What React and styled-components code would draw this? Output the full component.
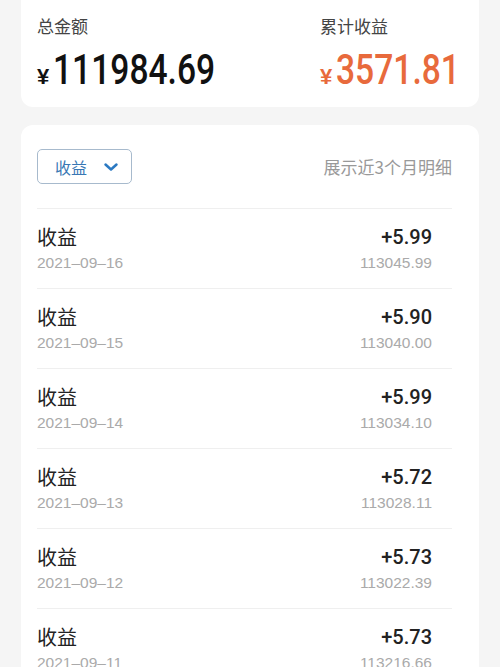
import styled, { createGlobalStyle } from "styled-components";

const GlobalStyle = createGlobalStyle`
  body {
    margin: 0;
    background: #f5f5f5;
    font-family: "Liberation Sans", "Noto Sans CJK SC", sans-serif;
  }
`;

const records = [
  { date: "2021–09–16", amount: "+5.99", balance: "113045.99" },
  { date: "2021–09–15", amount: "+5.90", balance: "113040.00" },
  { date: "2021–09–14", amount: "+5.99", balance: "113034.10" },
  { date: "2021–09–13", amount: "+5.72", balance: "113028.11" },
  { date: "2021–09–12", amount: "+5.73", balance: "113022.39" },
  { date: "2021–09–11", amount: "+5.73", balance: "113216.66" },
];

function App() {
  return (
    <Page>
      <GlobalStyle />
      <SummaryCard>
        <Stat>
          <StatLabel>总金额</StatLabel>
          <StatValue>
            <Yen>¥</Yen>
            <Digits>111984.69</Digits>
          </StatValue>
        </Stat>
        <Stat>
          <StatLabel>累计收益</StatLabel>
          <StatValue $accent>
            <Yen>¥</Yen>
            <Digits>3571.81</Digits>
          </StatValue>
        </Stat>
      </SummaryCard>

      <ListCard>
        <ListHeader>
          <Filter>
            收益
            <svg width="16" height="10" viewBox="0 0 16 10">
              <polyline
                points="2.5,2.5 8,7.5 13.5,2.5"
                fill="none"
                stroke="#2b79c2"
                strokeWidth="2.5"
                strokeLinecap="round"
                strokeLinejoin="round"
              />
            </svg>
          </Filter>
          <Hint>展示近3个月明细</Hint>
        </ListHeader>

        {records.map((r) => (
          <Row key={r.date}>
            <Col>
              <Title>收益</Title>
              <Sub>{r.date}</Sub>
            </Col>
            <Col $right>
              <Amount>{r.amount}</Amount>
              <Sub>{r.balance}</Sub>
            </Col>
          </Row>
        ))}
      </ListCard>
    </Page>
  );
}

const Page = styled.div`
  padding: 0 21px;
  display: flex;
  flex-direction: column;
  gap: 18px;
`;

const SummaryCard = styled.div`
  background: #fff;
  border-radius: 0 0 12px 12px;
  height: 107px;
  box-sizing: border-box;
  padding: 14px 16px 0;
  display: grid;
  grid-template-columns: 283px 1fr;
`;

const Stat = styled.div`
  display: flex;
  flex-direction: column;
`;

const StatLabel = styled.div`
  font-family: "Noto Sans CJK SC", sans-serif;
  font-size: 17px;
  line-height: 24px;
  color: #444;
`;

const StatValue = styled.div`
  margin-top: 8px;
  display: flex;
  align-items: baseline;
  gap: 4px;
  height: 48px;
  color: ${(p) => (p.$accent ? "#e86a3c" : "#111")};
  white-space: nowrap;
`;

const Yen = styled.span`
  font-family: "Liberation Sans", sans-serif;
  font-weight: 700;
  font-size: 22px;
`;

const Digits = styled.span`
  display: inline-block;
  font-family: Roboto, sans-serif;
  font-weight: 500;
  font-size: 42px;
  line-height: 48px;
  transform: scaleX(0.8);
  transform-origin: left center;
`;

const ListCard = styled.div`
  background: #fff;
  border-radius: 12px;
  padding: 24px 27px 0 16px;
`;

const ListHeader = styled.div`
  display: flex;
  align-items: center;
  justify-content: space-between;
  padding-bottom: 24px;
`;

const Filter = styled.button`
  width: 95px;
  height: 35px;
  box-sizing: border-box;
  border: 1px solid #a7bacd;
  border-radius: 5px;
  background: #fff;
  display: flex;
  align-items: center;
  gap: 16px;
  padding: 0 0 0 17px;
  font-family: "Noto Sans CJK SC", sans-serif;
  font-size: 16px;
  color: #3877b4;
`;

const Hint = styled.span`
  font-family: "Noto Sans CJK SC", sans-serif;
  font-size: 17px;
  color: #999;
`;

const Row = styled.div`
  height: 80px;
  box-sizing: border-box;
  border-top: 1px solid #efefef;
  padding: 14px 20px 0 0;
  display: flex;
  justify-content: space-between;
`;

const Col = styled.div`
  display: flex;
  flex-direction: column;
  align-items: ${(p) => (p.$right ? "flex-end" : "flex-start")};
`;

const Title = styled.div`
  font-family: "Noto Sans CJK SC", sans-serif;
  font-size: 20px;
  line-height: 28px;
  color: #222;
`;

const Amount = styled.div`
  font-family: Roboto, sans-serif;
  font-weight: 500;
  font-size: 20px;
  line-height: 28px;
  color: #222;
`;

const Sub = styled.div`
  margin-top: 1px;
  font-size: 15.5px;
  line-height: 22px;
  color: #aaa;
`;

export default App;
